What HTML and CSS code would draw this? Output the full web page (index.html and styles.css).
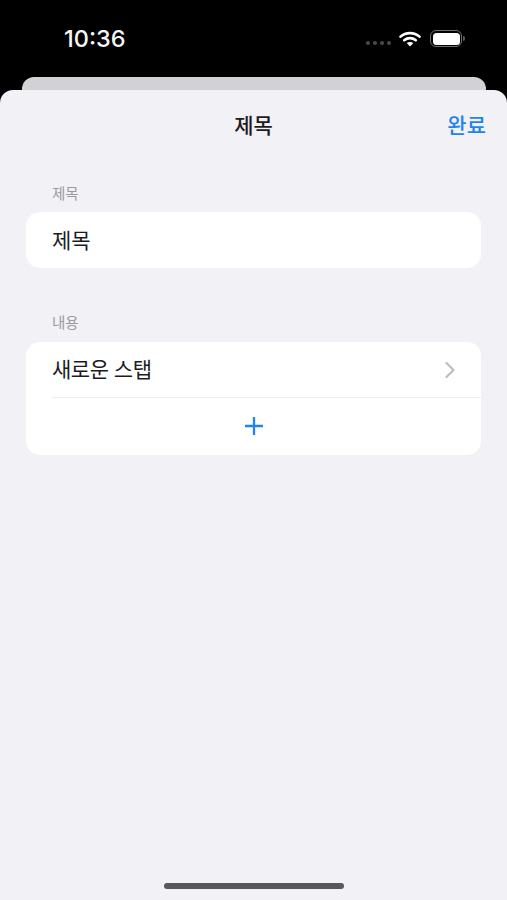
FILE: index.html
```html
<!DOCTYPE html>
<html lang="ko">
<head>
<meta charset="utf-8">
<title>제목</title>
<link rel="stylesheet" href="styles.css">
</head>
<body>
<div class="screen">
  <header class="status">
    <span class="time">10:36</span>
    <div class="status-icons">
      <div class="dots"><i></i><i></i><i></i><i></i></div>
      <svg class="wifi" width="22" height="16" viewBox="0 0 22 16" aria-hidden="true">
        <path d="M1.5 5.6C6.8.9 15.2.9 20.500 5.600" fill="none" stroke="#fff" stroke-width="2.6" stroke-linecap="round"/>
        <path d="M5.200 9.200c3.300-2.800 8.300-2.800 11.600 0" fill="none" stroke="#fff" stroke-width="2.600" stroke-linecap="round"/>
        <path d="M11 15.600l-3.300-3.500c1.900-1.500 4.700-1.500 6.600 0z" fill="#fff"/>
      </svg>
      <div class="battery"><div class="battery-body"><div class="battery-fill"></div></div><div class="battery-cap"></div></div>
    </div>
  </header>
  <div class="back-card"></div>
  <main class="sheet">
    <div class="nav">
      <h1 class="nav-title">제목</h1>
      <a class="nav-done">완료</a>
    </div>
    <section class="group group-first">
      <h2 class="group-label">제목</h2>
      <div class="card">
        <div class="row row-title">제목</div>
      </div>
    </section>
    <section class="group group-second">
      <h2 class="group-label">내용</h2>
      <div class="card">
        <div class="row row-step">
          <span class="step-name">새로운 스탭</span>
          <svg class="chevron" width="12" height="18" viewBox="0 0 12 18" aria-hidden="true"><path d="M2.500 2L9.500 9 2.500 16" fill="none" stroke="#bdbdc1" stroke-width="2.200" stroke-linecap="round" stroke-linejoin="round"/></svg>
        </div>
        <div class="divider"></div>
        <div class="row row-add">
          <svg width="18" height="18" viewBox="0 0 18 18" aria-hidden="true"><path d="M9 .500v17M.500 9h17" fill="none" stroke="#1f84f0" stroke-width="2.300" stroke-linecap="round"/></svg>
        </div>
      </div>
    </section>
    <div class="home-bar"></div>
  </main>
</div>
</body>
</html>
```
FILE: styles.css
```css
* { box-sizing: border-box; }
html, body { margin: 0; padding: 0; background: #000; }
body { font-family: "Noto Sans CJK KR", "Noto Sans", sans-serif; }
.screen { width: 507px; height: 900px; display: flex; flex-direction: column; overflow: hidden; background: #000; }

.status { height: 77px; flex: none; display: flex; justify-content: space-between; align-items: flex-start; padding: 25px 42px 0 64px; }
.time { color: #f6f6f6; font: 500 23.500px/28px Inter, sans-serif; }
.status-icons { display: flex; align-items: center; gap: 9px; padding-top: 5px; }
.dots { display: flex; gap: 3px; margin-top: 8px; margin-right: -1px; }
.dots i { width: 4px; height: 4px; border-radius: 50%; background: #4a4a4a; }
.wifi { margin-top: 0; }
.battery { display: flex; align-items: center; gap: 1px; }
.battery-body { width: 32px; height: 17px; border: 1.500px solid #6e6e6e; border-radius: 6px; padding: 1.500px; }
.battery-fill { height: 100%; background: #fff; border-radius: 3.500px; }
.battery-cap { width: 2px; height: 5px; background: #5e5e5e; border-radius: 0 2px 2px 0; }

.back-card { flex: none; height: 20px; margin: 0 21px -7px 22px; background: #d1d1d6; border-radius: 12px 12px 0 0; }

.sheet { flex: 1; position: relative; z-index: 1; background: #f1f1f6; border-radius: 13px 13px 0 0; display: flex; flex-direction: column; }

.nav { flex: none; height: 70px; display: flex; align-items: center; justify-content: center; position: relative; padding-bottom: 2px; }
.nav-title { margin: 0; font-size: 21px; line-height: 68px; font-weight: 500; color: #1c1c1e; }
.nav-done { position: absolute; right: 21px; top: 0; line-height: 69px; font-size: 21px; font-weight: 500; color: #1f84f0; }

.group { margin: 0 26px 0; }
.group-first { margin-top: 23px; }
.group-second { margin-top: 44px; }
.group-label { margin: 0 0 9px 26px; height: 20px; font-size: 14.500px; line-height: 20px; font-weight: 400; color: #9a9a9f; }
.group-second .group-label { margin-bottom: 10px; }
.card { background: #fff; border-radius: 14px; }
.row { font-size: 21px; color: #1c1c1e; display: flex; align-items: center; padding: 0 26px; }
.row-title { height: 56px; padding-bottom: 2px; }
.row-step { height: 55px; justify-content: space-between; }
.step-name { letter-spacing: -0.500px; margin-top: -3px; }
.chevron { margin-right: -1px; }
.divider { height: 1px; margin-left: 26px; background: #eeeef0; }
.row-add { height: 57px; justify-content: center; padding-bottom: 1px; }

.home-bar { width: 180px; height: 6px; border-radius: 3px; background: #58585c; margin: auto 0 11px 164px; }
```
